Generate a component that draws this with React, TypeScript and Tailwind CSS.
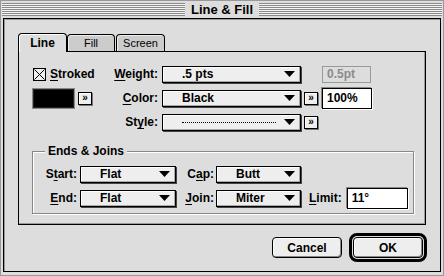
import type { ReactNode } from 'react'

function Arrow() {
  return (
    <svg width="11" height="6" viewBox="0 0 11 6" className="shrink-0">
      <path d="M0 0H11L5.5 6Z" fill="#000" />
    </svg>
  )
}

function Popup({ className, children }: { className: string; children: ReactNode }) {
  return (
    <div
      className={`flex h-[17px] items-center border border-black bg-[#eeeeee] pl-[19px] pr-[5px] shadow-[1px_1px_0_#444,inset_-1px_-1px_0_#aaa,inset_1px_1px_0_#fff] ${className}`}
    >
      <div className="flex flex-1 items-center text-[12px] leading-[14px] font-bold">{children}</div>
      <Arrow />
    </div>
  )
}

function More({ className = '' }: { className?: string }) {
  return (
    <div
      className={`flex h-[13px] w-[14px] items-center justify-center border border-black bg-[#eeeeee] text-[10px] leading-[10px] font-bold shadow-[1px_1px_0_#777,inset_1px_1px_0_#fff] ${className}`}
    >
      »
    </div>
  )
}

function Label({ className, children }: { className: string; children: ReactNode }) {
  return <div className={`text-right text-[12px] leading-[14px] font-bold ${className}`}>{children}</div>
}

function U({ children }: { children: ReactNode }) {
  return <span className="underline underline-offset-[2px]">{children}</span>
}

function Field({ className, children }: { className: string; children: ReactNode }) {
  return (
    <div
      className={`flex h-[21px] items-center border border-black bg-white pl-[4px] text-[12px] leading-[14px] font-bold shadow-[-1px_-1px_0_#888,1px_1px_0_#fff] ${className}`}
    >
      {children}
    </div>
  )
}

function Button({ children }: { children: ReactNode }) {
  return (
    <div className="flex h-[21px] w-[70px] items-center justify-center rounded-[4px] border border-black bg-[#eeeeee] text-[12px] font-bold shadow-[inset_-1px_-1px_0_#888,inset_1px_1px_0_#fff]">
      {children}
    </div>
  )
}

export default function App() {
  return (
    <div className="flex h-[276px] w-[444px] flex-col border border-[#999] bg-[#dddddd] px-[2px] pb-[3px] font-['Liberation_Sans',Arial,sans-serif] text-black">
      {/* title bar */}
      <div className="mx-[-1px] flex h-[17px] items-center">
        <div className="h-[13px] flex-1 bg-[repeating-linear-gradient(to_bottom,#8a8a8a_0px,#8a8a8a_1px,#f4f4f4_1px,#f4f4f4_2px)]" />
        <div className="px-[6px] text-[13px] leading-[15px] font-bold">Line &amp; Fill</div>
        <div className="h-[13px] flex-1 bg-[repeating-linear-gradient(to_bottom,#8a8a8a_0px,#8a8a8a_1px,#f4f4f4_1px,#f4f4f4_2px)]" />
      </div>

      <div className="flex flex-1 flex-col border border-black px-[14px] pt-[14px] shadow-[inset_1px_1px_0_#999]">
        {/* tabs */}
        <div className="flex h-[18px] items-end">
          <div className="relative z-10 mb-[-1px] flex h-[19px] w-[49px] items-start justify-center rounded-t-[4px] border border-b-0 border-black bg-[#dddddd] pt-[2px] text-[12px] leading-[14px] font-bold shadow-[inset_1px_1px_0_#fff]">
            Line
          </div>
          <div className="flex h-[17px] w-[48px] items-start justify-center rounded-t-[4px] border border-b-0 border-black bg-[#cccccc] pt-[1px] text-[11px] leading-[14px] shadow-[inset_1px_1px_0_#eee]">
            Fill
          </div>
          <div className="ml-[1px] flex h-[17px] w-[49px] items-start justify-center rounded-t-[4px] border border-b-0 border-black bg-[#cccccc] pt-[1px] text-[11px] leading-[14px] shadow-[inset_1px_1px_0_#eee]">
            Screen
          </div>
        </div>

        {/* panel */}
        <div className="border border-black bg-[#dddddd] pt-[10px] pb-[10px] shadow-[inset_-1px_-1px_0_#999]">
          <div className="pl-[14px]">
            <div className="flex h-[24px] items-center">
              <div className="flex w-[67px] items-center">
                <svg width="13" height="13" viewBox="0 0 13 13" className="shrink-0">
                  <rect x="0.5" y="0.5" width="12" height="12" fill="#eeeeee" stroke="#000" />
                  <path d="M1.5 1.5L11.5 11.5M11.5 1.5L1.5 11.5" stroke="#000" strokeWidth="1" />
                </svg>
                <span className="ml-[4px] text-[12px] leading-[14px] font-bold">
                  <U>S</U>troked
                </span>
              </div>
              <Label className="w-[58px]">
                <U>W</U>eight:
              </Label>
              <Popup className="ml-[4px] w-[139px]">.5 pts</Popup>
              <div className="ml-[21px] flex h-[17px] w-[49px] items-center border border-[#999] pl-[4px] text-[12px] leading-[14px] font-bold text-[#8c8c8c]">
                0.5pt
              </div>
            </div>

            <div className="flex h-[24px] items-center">
              <div className="flex w-[67px] items-center">
                <div className="ml-[-1px] h-[21px] w-[43px] border border-[#888] bg-black shadow-[inset_0_0_0_1px_#222]" />
                <More className="ml-[3px]" />
              </div>
              <Label className="w-[58px]">
                <U>C</U>olor:
              </Label>
              <Popup className="ml-[4px] w-[139px]">Black</Popup>
              <More className="ml-[3px]" />
              <Field className="ml-[4px] w-[50px]">100%</Field>
            </div>

            <div className="flex h-[24px] items-center">
              <div className="w-[67px]" />
              <Label className="w-[58px]">
                St<U>y</U>le:
              </Label>
              <Popup className="ml-[4px] w-[139px]">
                <div className="mr-[8px] h-0 flex-1 border-t border-dotted border-black" />
              </Popup>
              <More className="ml-[3px]" />
            </div>
          </div>

          <fieldset className="mt-[10px] mr-[11px] ml-[13px] border border-[#888] pt-[4px] pb-[3px] shadow-[inset_1px_1px_0_#fff,1px_1px_0_#fff]">
            <legend className="ml-[12px] bg-[#dddddd] px-[3px] text-[12px] leading-[14px] font-bold">
              Ends &amp; Joins
            </legend>
            <div className="flex h-[24px] items-center">
              <Label className="w-[44px]">
                S<U>t</U>art:
              </Label>
              <Popup className="ml-[3px] w-[96px]">Flat</Popup>
              <Label className="w-[38px]">
                C<U>a</U>p:
              </Label>
              <Popup className="ml-[2px] w-[85px]">Butt</Popup>
            </div>
            <div className="flex h-[24px] items-center">
              <Label className="w-[44px]">
                <U>E</U>nd:
              </Label>
              <Popup className="ml-[3px] w-[96px]">Flat</Popup>
              <Label className="w-[38px]">
                <U>J</U>oin:
              </Label>
              <Popup className="ml-[2px] w-[85px]">Miter</Popup>
              <Label className="ml-[8px]">
                <U>L</U>imit:
              </Label>
              <Field className="ml-[5px] w-[61px]">11°</Field>
            </div>
          </fieldset>
        </div>

        {/* buttons */}
        <div className="mt-[8px] mr-[-1px] flex items-center justify-end">
          <Button>Cancel</Button>
          <div className="ml-[7px] flex h-[29px] w-[78px] items-center justify-center rounded-[8px] border-[3px] border-black">
            <Button>OK</Button>
          </div>
        </div>
      </div>
    </div>
  )
}
